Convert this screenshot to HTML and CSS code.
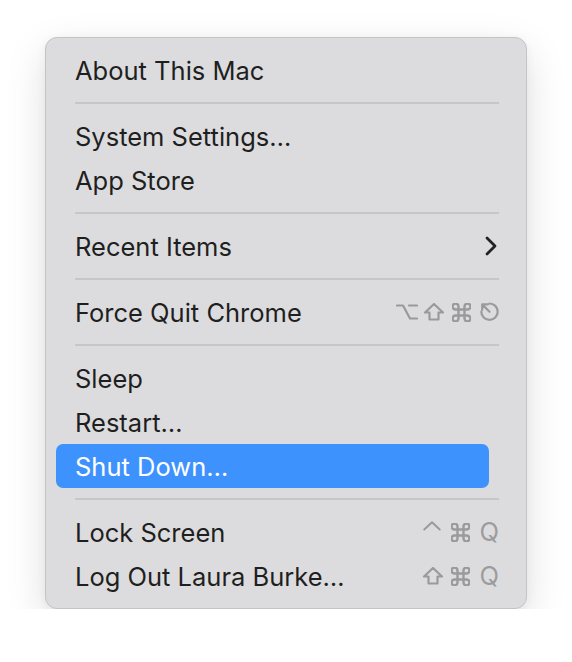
FILE: index.html
```html
<!DOCTYPE html>
<html>
<head>
<meta charset="utf-8">
<link rel="stylesheet" href="styles.css">
</head>
<body>
<div class="menu">
  <div class="item">About This Mac</div>
  <div class="sep"></div>
  <div class="item">System Settings…</div>
  <div class="item">App Store</div>
  <div class="sep"></div>
  <div class="item">Recent Items
    <svg class="chev" viewBox="0 0 12 20"><path d="M2 2 L10 10 L2 18"/></svg>
  </div>
  <div class="sep"></div>
  <div class="item">Force Quit Chrome
    <span class="keys">
      <svg class="key" viewBox="0 0 22 18"><path d="M1 2.5 H7 L14 15.5 H21 M13 2.5 H21"/></svg>
      <svg class="key" viewBox="0 0 22 18"><path d="M11 1 L2 9.5 H6.5 V16.5 H15.5 V9.5 H20 Z"/></svg>
      <svg class="cmd" viewBox="2.5 2.5 19 19"><path d="M15 6v12a3 3 0 1 0 3-3H6a3 3 0 1 0 3 3V6a3 3 0 1 0-3 3h12a3 3 0 1 0-3-3"/></svg>
      <svg class="esc" viewBox="0 0 20 20"><path d="M10.5 1.5 A8.2 8.2 0 1 1 2.3 9.7 M3.2 2.4 L10.5 9.7 M3.2 2.4 H8.8 M3.2 2.4 V8"/></svg>
    </span>
  </div>
  <div class="sep"></div>
  <div class="item">Sleep</div>
  <div class="item">Restart…</div>
  <div class="item active">Shut Down…</div>
  <div class="sep"></div>
  <div class="item">Lock Screen
    <span class="keys">
      <svg class="key ctl" viewBox="0 0 22 18"><path d="M2.5 9.5 L11 1.5 L19.5 9.5"/></svg>
      <svg class="cmd" viewBox="2.5 2.5 19 19"><path d="M15 6v12a3 3 0 1 0 3-3H6a3 3 0 1 0 3 3V6a3 3 0 1 0-3 3h12a3 3 0 1 0-3-3"/></svg>
      <span class="q">Q</span>
    </span>
  </div>
  <div class="item">Log Out Laura Burke…
    <span class="keys">
      <svg class="key" viewBox="0 0 22 18"><path d="M11 1 L2 9.5 H6.5 V16.5 H15.5 V9.5 H20 Z"/></svg>
      <svg class="cmd" viewBox="2.5 2.5 19 19"><path d="M15 6v12a3 3 0 1 0 3-3H6a3 3 0 1 0 3 3V6a3 3 0 1 0-3 3h12a3 3 0 1 0-3-3"/></svg>
      <span class="q">Q</span>
    </span>
  </div>
</div>
</body>
</html>
```
FILE: styles.css
```css
html, body {
  margin: 0;
  background: #ffffff;
}
body {
  padding: 37px 0 0 45px;
}
.menu {
  width: 482px;
  box-sizing: border-box;
  border: 1px solid #c4c4c6;
  border-radius: 12px;
  background: #dcdcde;
  padding: 10px 27px 10px 10px;
  box-shadow: 0 14px 40px rgba(0, 0, 0, 0.13), 0 2px 10px rgba(0, 0, 0, 0.05);
  font-family: Inter, "Noto Sans", sans-serif;
  font-size: 25.5px;
  color: #1f1f1f;
}
.item {
  height: 44px;
  display: flex;
  align-items: center;
  justify-content: space-between;
  padding-left: 19px;
}
.item.active {
  background: #3e92fe;
  color: #ffffff;
  border-radius: 7px;
  margin-right: 10px;
}
.sep {
  height: 22px;
  display: flex;
  align-items: center;
  padding-left: 19px;
}
.sep::after {
  content: "";
  flex: 1;
  height: 2px;
  background: #c6c6c8;
}
.chev {
  width: 12px;
  height: 20px;
  margin-right: 2px;
  fill: none;
  stroke: #222222;
  stroke-width: 2.8;
  stroke-linecap: round;
  stroke-linejoin: round;
}
.keys {
  display: flex;
  align-items: center;
  gap: 5px;
  color: #9c9c9e;
}
.key {
  width: 22px;
  height: 18px;
  fill: none;
  stroke: #9a9a9c;
  stroke-width: 2.2;
  stroke-linejoin: round;
  stroke-linecap: round;
}
.esc {
  width: 20px;
  height: 20px;
  margin-left: 1px;
  fill: none;
  stroke: #9a9a9c;
  stroke-width: 2.2;
  stroke-linejoin: round;
  stroke-linecap: round;
}
.ctl {
  width: 20px;
  margin-right: 2px;
  transform: translateY(-3px);
}
.cmd {
  width: 19px;
  height: 19px;
  margin: 0 2px;
  fill: none;
  stroke: #9a9a9c;
  stroke-width: 2.4;
  stroke-linejoin: round;
  stroke-linecap: round;
}
.q {
  font-size: 25.5px;
  line-height: 1;
  margin-left: 3px;
}
```
